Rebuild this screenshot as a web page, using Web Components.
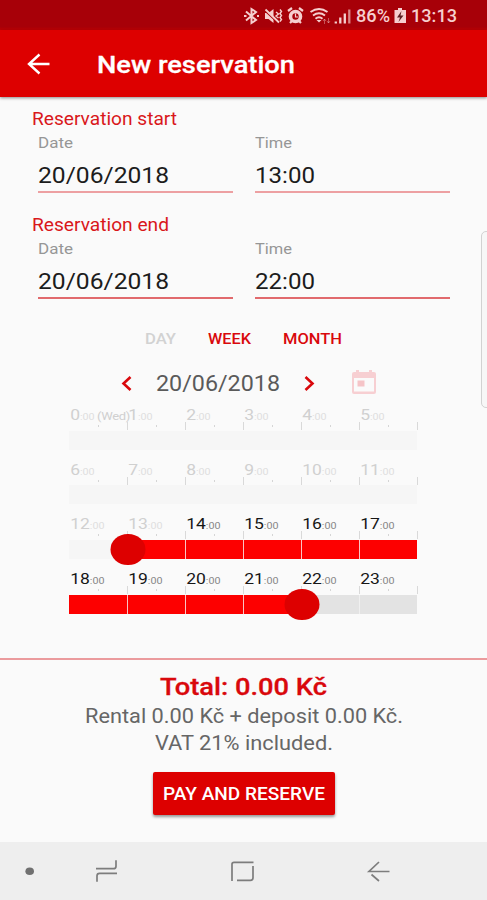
<!DOCTYPE html>
<html lang="en">
<head>
<meta charset="utf-8">
<title>New reservation</title>
<style>
  body {
    margin: 0;
    width: 487px;
    height: 900px;
    overflow: hidden;
    background: #fafafa;
    font-family: Roboto, "Liberation Sans", sans-serif;
  }
</style>
</head>
<body>
<reservation-page></reservation-page>

<script>
// Text stretched horizontally to the width given in the attribute
class WideText extends HTMLElement {
  constructor() {
    super();
    this.attachShadow({ mode: 'open' });
  }

  connectedCallback() {
    this.shadowRoot.innerHTML = `
      <style>
        :host { display: block; flex: none; white-space: nowrap; width: ${this.getAttribute('width')}px; }
        span { display: inline-block; transform-origin: 0 50%; }
      </style>
      <span><slot></slot></span>`;
    this.fit();
  }

  fit() {
    const span = this.shadowRoot.querySelector('span');
    const scale = this.getAttribute('width') / span.getBoundingClientRect().width;
    if (isFinite(scale)) span.style.transform = `scaleX(${scale})`;
  }
}

class StatusBar extends HTMLElement {
  constructor() {
    super();
    this.attachShadow({ mode: 'open' });
    this.shadowRoot.innerHTML = `
      <style>
        :host {
          display: flex;
          align-items: center;
          box-sizing: border-box;
          height: 30px;
          padding: 2px 30px 0 243px;
          background: linear-gradient(#a70008 27px, #c40004 30px);
          color: #f6cfcf;
          font-size: 17.5px;
          font-weight: 500;
          line-height: 28px;
        }
        svg { flex: none; display: block; }
      </style>
      <svg width="113" height="20" viewBox="243 6 113 20" fill="none" stroke="#f6cfcf" stroke-width="1.7">
        <path d="M246 11.5L256 20L251.5 23V9L256 12L246 20.5M244 16h2.500M257 16h2" stroke-width="2"/>
        <path d="M265 13h3.500l5-4v14l-5-4h-3.500z" fill="#f6cfcf" stroke="none"/>
        <path d="M265 11L279 24" stroke="#a70008" stroke-width="1.200"/>
        <path d="M265.500 9.500L279 22.500" stroke-width="1.800"/>
        <path d="M276 12l2.500 2-2.500 2 2.500 2M280 9.500l1.500 2-1.500 2 1.500 2-1.500 2 1.500 2-1.500 2" stroke-width="1.400"/>
        <circle cx="295.500" cy="16.500" r="5" stroke-width="3.600"/>
        <path d="M295.500 13.500v3.500h2.500" stroke-width="1.200"/>
        <path d="M288 11l4-3M303 11l-4-3M290 23l2-2M301 23l-2-2" stroke-width="2.200"/>
        <path d="M310.500 12q8.500-6 17 0M313 15.500q6-4.500 12 0M315.500 18.800q3.500-3 7 0" stroke-width="1.900"/>
        <path d="M316.500 20h5l-2.500 2.500z" fill="#f6cfcf" stroke="none"/>
        <path d="M324.500 24v-5m-1.500 2l1.500-2 1.500 2M328.500 18v5m-1.500-2l1.500 2 1.500-2" opacity=".4" stroke-width="1"/>
        <path d="M335.800 23.500v-2M340.300 23.500v-6M344.800 23.500v-10" stroke-width="2.300"/>
        <path d="M349.300 23.500V9.500" stroke-width="2.300" opacity=".65"/>
      </svg>
      <wide-text width="34">86%</wide-text>
      <svg width="21" height="20" viewBox="390 6 21 20">
        <path d="M398 8h4v2h4v13h-11.500V10h3.500z" fill="#f6cfcf"/>
        <path d="M401.500 11l-4.500 6.500h3L398.500 22l5-6.500h-3z" fill="#5c2022"/>
      </svg>
      <wide-text width="46">13:13</wide-text>`;
  }
}

class AppBar extends HTMLElement {
  constructor() {
    super();
    this.attachShadow({ mode: 'open' });
    this.shadowRoot.innerHTML = `
      <style>
        :host {
          display: flex;
          align-items: center;
          box-sizing: border-box;
          height: 67px;
          padding: 1px 0 0 26px;
          background: #dd0000;
          box-shadow: 0 1px 3px rgba(0, 0, 0, .45);
          color: #fff;
          font-size: 24.5px;
          font-weight: 500;
        }
        svg { display: block; margin-right: 45px; }
        wide-text { margin-top: 1px; -webkit-text-stroke: .3px #fff; }
      </style>
      <svg width="26" height="24" viewBox="26 52 26 24" fill="none" stroke="#fff" stroke-width="2.400">
        <path d="M49.500 64H29M39.500 54.500L29 64l10.500 9.500"/>
      </svg>
      <wide-text width="198"><slot></slot></wide-text>`;
  }
}

class DateField extends HTMLElement {
  constructor() {
    super();
    this.attachShadow({ mode: 'open' });
  }

  connectedCallback() {
    this.shadowRoot.innerHTML = `
      <style>
        :host { display: block; width: 195px; border-bottom: 2px solid var(--line, #eda0a2); }
        .label { color: #969696; font-size: 14px; line-height: 20px; }
        .value { color: #1c1c1c; font-size: 22px; line-height: 28px; padding: 9px 0 1px; }
      </style>
      <wide-text class="label" width="${this.getAttribute('label-width')}">${this.getAttribute('label')}</wide-text>
      <wide-text class="value" width="${this.getAttribute('value-width')}"><slot></slot></wide-text>`;
  }
}

class FieldGroup extends HTMLElement {
  constructor() {
    super();
    this.attachShadow({ mode: 'open' });
  }

  connectedCallback() {
    this.shadowRoot.innerHTML = `
      <style>
        :host { display: block; height: 106px; padding-left: 32px; }
        .heading { color: #d9171b; font-size: 17.5px; line-height: 24px; }
        .fields { display: flex; gap: 22px; padding: 2px 0 0 6px; }
      </style>
      <wide-text class="heading" width="${this.getAttribute('heading-width')}">${this.getAttribute('heading')}</wide-text>
      <div class="fields"><slot></slot></div>`;
  }
}

class RangeTabs extends HTMLElement {
  constructor() {
    super();
    this.attachShadow({ mode: 'open' });
    this.shadowRoot.innerHTML = `
      <style>
        :host {
          display: flex;
          gap: 32px;
          padding-left: 145px;
          height: 20px;
          line-height: 20px;
          font-size: 14.5px;
          font-weight: 500;
          color: #d9080c;
        }
        .off { color: #d2d2d2; }
      </style>
      <wide-text class="off" width="31">DAY</wide-text>
      <wide-text width="43">WEEK</wide-text>
      <wide-text width="59">MONTH</wide-text>`;
  }
}

class DayPicker extends HTMLElement {
  constructor() {
    super();
    this.attachShadow({ mode: 'open' });
    this.shadowRoot.innerHTML = `
      <style>
        :host {
          display: flex;
          align-items: center;
          height: 30px;
          padding-left: 120px;
          color: #5a5a5a;
          font-size: 21.5px;
          line-height: 30px;
        }
        svg { display: block; flex: none; }
        .prev { margin-right: 22px; }
        .next { margin: 0 34px 0 23px; }
        .calendar { margin-top: -4px; }
      </style>
      <svg class="prev" width="14" height="20" viewBox="0 0 14 20" fill="none" stroke="#d9080c" stroke-width="2.600">
        <path d="M10.500 3L3.500 9.500l7 6.500"/>
      </svg>
      <wide-text width="124">20/06/2018</wide-text>
      <svg class="next" width="14" height="20" viewBox="0 0 14 20" fill="none" stroke="#d9080c" stroke-width="2.600">
        <path d="M2.500 3l7 6.500-7 6.500"/>
      </svg>
      <svg class="calendar" width="26" height="26" viewBox="0 0 26 26">
        <path fill="#f7cfd2" fill-rule="evenodd" d="M5 1h3v2h10V1h3v2h2q2 0 2 2v18q0 2-2 2h-20q-2 0-2-2V5q0-2 2-2H5zM3 9v13.500h20V9z"/>
        <rect x="6.500" y="11.500" width="7" height="6" fill="#f5c4c7"/>
      </svg>`;
  }
}

// One row of six hours; from/to mark the selected part in hours of the row
class HourRow extends HTMLElement {
  constructor() {
    super();
    this.attachShadow({ mode: 'open' });
  }

  getHours() {
    const start = +this.getAttribute('start');
    const enabled = +this.getAttribute('enabled');
    const from = +this.getAttribute('from');
    const to = +this.getAttribute('to');
    let cells = '';
    for (let i = 0; i < 6; i++) {
      const hour = start + i;
      const state = `${i >= enabled ? 'on' : ''} ${i >= from && i < to ? 'picked' : ''}`;
      const day = hour === 0 ? '<i>(Wed)</i>' : '';
      cells += `
        <div class="hour ${state}">
          <div class="label"><span><b>${hour}</b><small>:00</small>${day}</span></div>
          <div class="bar"></div>
        </div>`;
    }
    return cells;
  }

  connectedCallback() {
    const handle = this.getAttribute('handle');
    this.shadowRoot.innerHTML = `
      <style>
        :host { display: flex; position: relative; width: 348px; height: 54.7px; }
        .hour { position: relative; width: 58px; color: #d0d0d0; }
        .label { height: 26.5px; }
        .label span {
          display: inline-block;
          white-space: nowrap;
          line-height: 22px;
          padding-left: 1px;
          transform: scaleX(1.13);
          transform-origin: 0 50%;
        }
        b { font-weight: 400; font-size: 15.5px; }
        small { font-size: 9.5px; color: #dedede; }
        i { font-style: normal; font-size: 11.5px; margin-left: 2px; letter-spacing: -.3px; }
        .on { color: #161616; }
        .on small { color: #858585; }
        .bar { height: 19px; background: #f6f6f6; }
        .on .bar { background: #e3e3e3; }
        .picked .bar { background: #fd0000; }
        .hour::before {
          content: "";
          position: absolute;
          right: -1px;
          top: 18px;
          width: 1px;
          height: 8px;
          background: #d9d9d9;
        }
        .hour::after {
          content: "";
          position: absolute;
          left: 29px;
          top: 21px;
          width: 1px;
          height: 2px;
          background: #d5d5d5;
        }
        .on + .on .bar { box-shadow: inset 1px 0 #f0f0f0; }
        .picked + .picked .bar { box-shadow: inset 1px 0 #f9c4c4; }
        .handle {
          position: absolute;
          top: 20.500px;
          width: 35px;
          height: 31.500px;
          border-radius: 50%;
          background: #dd0000;
          transform: translateX(-50%);
        }
      </style>
      ${this.getHours()}
      ${handle ? `<div class="handle" style="left: ${handle * 58 + 0.5}px"></div>` : ''}`;
  }
}

class PaySummary extends HTMLElement {
  constructor() {
    super();
    this.attachShadow({ mode: 'open' });
    this.shadowRoot.innerHTML = `
      <style>
        :host {
          display: flex;
          flex-direction: column;
          align-items: center;
          box-sizing: border-box;
          height: 184px;
          padding-top: 11px;
          border-top: 2px solid #eb9b9d;
        }
        .total { color: #d9080c; font-size: 24px; font-weight: 500; line-height: 33px; -webkit-text-stroke: .3px #d9080c; }
        .line { color: #666; font-size: 19.500px; line-height: 26.500px; }
        button {
          display: flex;
          align-items: center;
          justify-content: center;
          width: 182px;
          height: 43px;
          margin-top: 15px;
          padding: 0;
          border: 0;
          border-radius: 2px;
          background: #dd0000;
          color: #fff;
          font: 500 17.500px Roboto, "Liberation Sans", sans-serif;
          text-align: left;
          box-shadow: 0 2px 3px rgba(0, 0, 0, .4);
        }
      </style>
      <wide-text class="total" width="167">Total: 0.00 Kč</wide-text>
      <wide-text class="line" width="318">Rental 0.00 Kč + deposit 0.00 Kč.</wide-text>
      <wide-text class="line" width="178">VAT 21% included.</wide-text>
      <button><wide-text width="162">PAY AND RESERVE</wide-text></button>`;
  }
}

class SystemNav extends HTMLElement {
  constructor() {
    super();
    this.attachShadow({ mode: 'open' });
    this.shadowRoot.innerHTML = `
      <style>
        :host { display: block; height: 58px; background: #eee; }
        svg { display: block; }
      </style>
      <svg width="487" height="58" viewBox="0 842 487 58" fill="none" stroke="#7d7d7d" stroke-width="1.700">
        <ellipse cx="29.700" cy="871.300" rx="4.300" ry="3.800" fill="#707070" stroke="none"/>
        <path d="M96 868.700h17.500q2.500 0 2.500-2.500v-6M117 873.300H99.500q-2.500 0-2.500 2.500v6"/>
        <path d="M253.500 862.300H234q-2 0-2 2v16.700M237 880.300h13.500q2.500 0 2.500-2.500V866"/>
        <path d="M389.500 871.500H369l10-9.500M371.500 874.500l7.500 6.500"/>
      </svg>`;
  }
}

class ReservationPage extends HTMLElement {
  constructor() {
    super();
    this.attachShadow({ mode: 'open' });
    this.shadowRoot.innerHTML = `
      <style>
        :host { display: block; position: relative; height: 900px; overflow: hidden; }
        main { box-sizing: border-box; height: 561px; padding-top: 10px; }
        range-tabs { margin-top: 11px; }
        day-picker { margin-top: 19px; }
        .hours { margin: 5px 0 0 69px; }
        .edge {
          position: absolute;
          right: -8px;
          top: 231px;
          width: 12px;
          height: 175px;
          border: 1px solid #d2d2d2;
          border-radius: 5px;
          background: #f7f7f7;
        }
      </style>
      <status-bar></status-bar>
      <app-bar>New reservation</app-bar>
      <main>
        <field-group heading="Reservation start" heading-width="145">
          <date-field label="Date" label-width="35" value-width="131">20/06/2018</date-field>
          <date-field label="Time" label-width="37" value-width="60">13:00</date-field>
        </field-group>
        <field-group heading="Reservation end" heading-width="137" style="--line: #e16a6d">
          <date-field label="Date" label-width="35" value-width="131">20/06/2018</date-field>
          <date-field label="Time" label-width="37" value-width="60">22:00</date-field>
        </field-group>
        <range-tabs></range-tabs>
        <day-picker></day-picker>
        <div class="hours">
          <hour-row start="0" enabled="6" from="6" to="6"></hour-row>
          <hour-row start="6" enabled="6" from="6" to="6"></hour-row>
          <hour-row start="12" enabled="2" from="1" to="6" handle="1"></hour-row>
          <hour-row start="18" enabled="0" from="0" to="4" handle="4"></hour-row>
        </div>
      </main>
      <pay-summary></pay-summary>
      <system-nav></system-nav>
      <div class="edge"></div>`;
  }
}

customElements.define('wide-text', WideText);
customElements.define('status-bar', StatusBar);
customElements.define('app-bar', AppBar);
customElements.define('date-field', DateField);
customElements.define('field-group', FieldGroup);
customElements.define('range-tabs', RangeTabs);
customElements.define('day-picker', DayPicker);
customElements.define('hour-row', HourRow);
customElements.define('pay-summary', PaySummary);
customElements.define('system-nav', SystemNav);
customElements.define('reservation-page', ReservationPage);
</script>
</body>
</html>
